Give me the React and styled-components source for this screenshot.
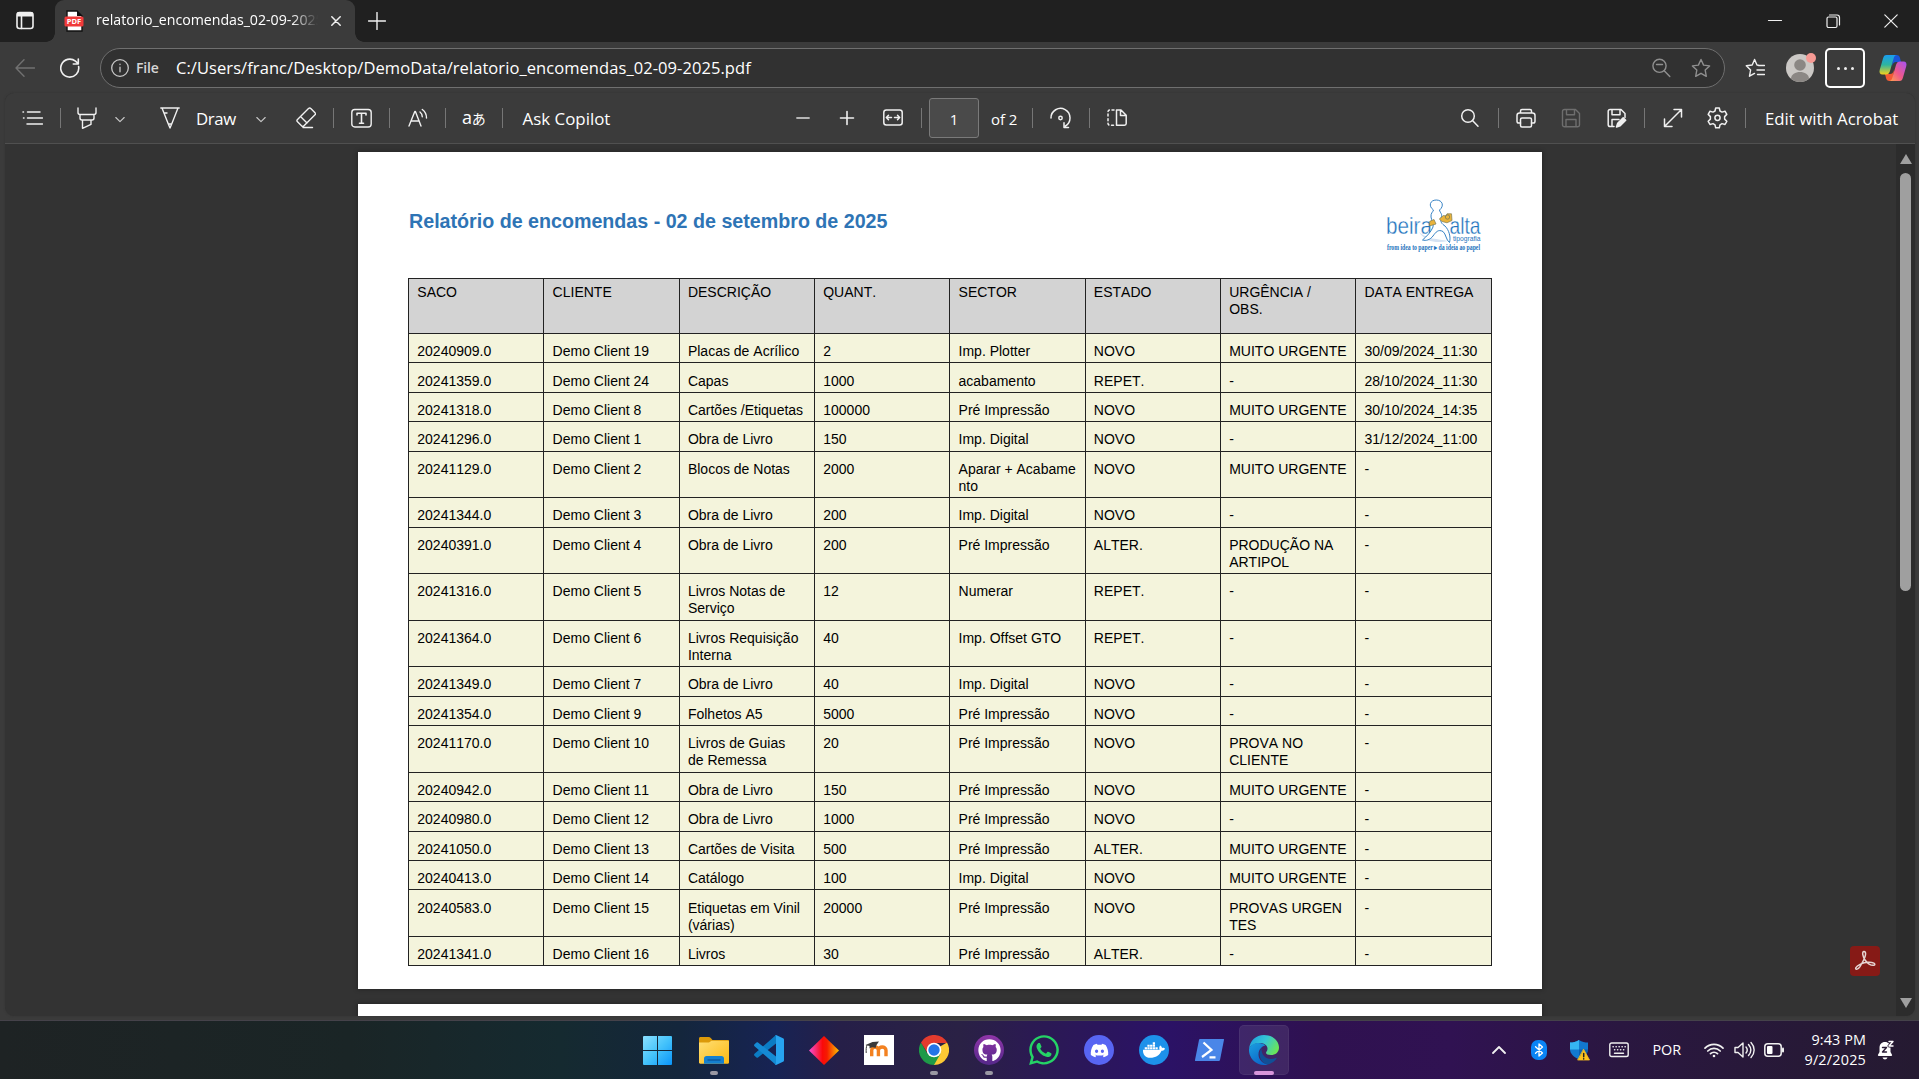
import React from "react";
import styled, { createGlobalStyle, css } from "styled-components";
import { FaGithub, FaWhatsapp, FaDiscord, FaDocker } from "react-icons/fa";

const GlobalStyle = createGlobalStyle`
  * { box-sizing: border-box; }
  html, body { margin: 0; padding: 0; background: #3b3b3b; }
  body { overflow: hidden; }
`;

const ui = `"Open Sans", "Noto Sans", sans-serif`;

const Desktop = styled.div`
  width: 1919px;
  height: 1079px;
  display: flex;
  flex-direction: column;
  overflow: hidden;
  background: #3b3b3b;
  font-family: ${ui};
  color: #fff;
`;

const Label = styled.span`
  display: block;
  flex: none;
  white-space: nowrap;
  font-size: ${(p) => p.$size || 16.5}px;
  line-height: 24px;
  letter-spacing: ${(p) => p.$ls || 0}px;
  font-weight: ${(p) => p.$weight || 400};
  width: ${(p) => (p.$w ? `${p.$w}px` : "auto")};
  margin-left: ${(p) => p.$ml || 0}px;
  padding-top: ${(p) => p.$drop || 0}px;
  padding-bottom: ${(p) => p.$lift || 0}px;
  color: ${(p) => p.$color || "#fff"};
`;

const AltScriptLabel = styled(Label)`
  font-family: "Open Sans", "Noto Sans CJK JP", sans-serif;
  small {
    font-size: 14px;
  }
`;

const IconBox = styled.svg`
  display: block;
  flex: none;
  width: ${(p) => p.$w || 20}px;
  height: ${(p) => p.$h || p.$w || 20}px;
  margin-left: ${(p) => p.$ml || 0}px;
  fill: none;
  stroke: ${(p) => p.$color || "#f0f0f0"};
  stroke-width: ${(p) => p.$sw || 1.4};
  stroke-linecap: round;
  stroke-linejoin: round;
`;

const Icon = ({ w = 20, h, children, ...rest }) => (
  <IconBox $w={w} $h={h || w} viewBox={`0 0 ${w} ${h || w}`} {...rest}>
    {children}
  </IconBox>
);

/* ---------- Tab strip ---------- */

const TabStrip = styled.header`
  height: 42px;
  flex: none;
  display: flex;
  align-items: center;
  background: #202020;
  padding-left: 15px;
`;

const Tab = styled.div`
  position: relative;
  width: 300px;
  height: 42px;
  margin-left: 20px;
  padding-left: 9px;
  padding-bottom: 1px;
  display: flex;
  align-items: center;
  background: #3b3b3b;
  border-radius: 9px 9px 0 0;
  &::before,
  &::after {
    content: "";
    position: absolute;
    bottom: 0;
    width: 9px;
    height: 9px;
  }
  &::before {
    left: -9px;
    background: radial-gradient(circle at 0 0, #202020 8.5px, #3b3b3b 9px);
  }
  &::after {
    right: -9px;
    background: radial-gradient(circle at 100% 0, #202020 8.5px, #3b3b3b 9px);
  }
`;

const TabTitle = styled(Label)`
  overflow: hidden;
  mask-image: linear-gradient(90deg, #000 88%, transparent 100%);
`;

const WindowControls = styled.div`
  display: flex;
  align-items: center;
  margin-left: auto;
  margin-right: 20px;
  gap: 42px;
`;

/* ---------- Address row ---------- */

const AddressRow = styled.div`
  height: 51px;
  flex: none;
  display: flex;
  align-items: center;
  padding: 1px 12px 0 15px;
  background: #3b3b3b;
`;

const AddressBar = styled.div`
  width: 1625px;
  height: 40px;
  margin-left: 20px;
  padding: 0 13px 0 10px;
  display: flex;
  align-items: center;
  border: 1px solid #6f6f6f;
  border-radius: 20px;
  background: #313131;
`;

const Spacer = styled.div`
  flex: 1;
`;

const MoreButton = styled.div`
  width: 40px;
  height: 40px;
  margin-left: 11px;
  display: flex;
  align-items: center;
  justify-content: center;
  gap: 4px;
  border: 2px solid #fff;
  border-radius: 5px;
`;

const Dot = styled.i`
  width: 3px;
  height: 3px;
  border-radius: 50%;
  background: #eee;
`;

/* ---------- PDF viewer ---------- */

const Viewer = styled.main`
  height: 923px;
  flex: none;
  margin: 0 4px 0 5px;
  display: flex;
  flex-direction: column;
  overflow: hidden;
  border-radius: 9px;
  background: #333;
  box-shadow: 0 0 2px 0 #333;
`;

const Toolbar = styled.div`
  height: 51px;
  flex: none;
  display: flex;
  align-items: center;
  padding-right: 16px;
  background: #3b3b3b;
  border-bottom: 1px solid #505050;
`;

const Divider = styled.i`
  width: 1px;
  height: 20px;
  flex: none;
  margin-left: ${(p) => p.$ml}px;
  background: #767676;
`;

const PageInput = styled.div`
  width: 50px;
  height: 40px;
  margin-left: 7px;
  display: flex;
  align-items: center;
  justify-content: center;
  background: #4a4a4a;
  border: 1px solid #7a7a7a;
  border-radius: 3px;
`;

const ViewerBody = styled.div`
  flex: 1;
  min-height: 0;
  display: flex;
`;

const Pages = styled.div`
  position: relative;
  flex: 1;
  display: flex;
  flex-direction: column;
  gap: 15px;
  padding: 8px 0 0 353px;
  overflow: hidden;
`;

const Sheet = styled.section`
  width: 1184px;
  height: ${(p) => p.$h}px;
  flex: none;
  background: #fff;
  padding: 47px 50px 0;
  box-shadow: 0 0 4px 1px rgba(0, 0, 0, 0.25);
`;

const SheetHeader = styled.div`
  height: 79.3px;
  display: flex;
  justify-content: space-between;
  padding: 0 9px 0 1px;
`;

const ReportTitle = styled.h1`
  margin: 10px 0 0;
  font: bold 19.66px/24px "Liberation Sans", Arial, sans-serif;
  color: #2e74b5;
  white-space: nowrap;
`;

const Table = styled.div`
  width: 1083.5px;
  display: flex;
  flex-direction: column;
  border-left: 1px solid #222;
  border-top: 1px solid #222;
  color: #000;
  font: 14px/17.1px "Liberation Sans", Arial, sans-serif;
  font-kerning: none;
`;

const Row = styled.div`
  display: grid;
  grid-template-columns: repeat(8, 1fr);
  height: ${(p) => p.$h}px;
  background: ${(p) => (p.$head ? "#d3d3d3" : "#f4f4dc")};
`;

const Cell = styled.div`
  padding: ${(p) => (p.$head ? 4.8 : 9.2)}px 0 0 8.3px;
  border-right: 1px solid #222;
  border-bottom: 1px solid #222;
  white-space: pre;
`;

const AcrobatBadge = styled.div`
  position: absolute;
  right: 16px;
  bottom: 40px;
  width: 30px;
  height: 30px;
  display: flex;
  align-items: center;
  justify-content: center;
  border-radius: 4px;
  background: #861a16;
`;

const ScrollTrack = styled.div`
  width: 19px;
  flex: none;
  display: flex;
  flex-direction: column;
  align-items: center;
  padding: 10px 0 8px;
  background: #2c2c2c;
`;

const Arrow = styled.i`
  width: 0;
  height: 0;
  border: 6.5px solid transparent;
  ${(p) =>
    p.$up
      ? css`
          border-top: 0;
          border-bottom: 10px solid #9f9f9f;
        `
      : css`
          border-bottom: 0;
          border-top: 10px solid #9f9f9f;
          margin-top: auto;
        `}
`;

const Thumb = styled.div`
  width: 11px;
  height: 418px;
  margin-top: 9px;
  border-radius: 6px;
  background: #9f9f9f;
`;

/* ---------- Taskbar ---------- */

const Taskbar = styled.footer`
  height: 59px;
  flex: none;
  margin-top: 4px;
  display: flex;
  align-items: center;
  padding: 0 25px 0 628px;
  border-top: 1px solid #45424a;
  background: linear-gradient(
    90deg,
    #1e2324 0,
    #1a2526 350px,
    #152a30 560px,
    #14263c 680px,
    #172354 775px,
    #261f48 840px,
    #2a2145 960px,
    #2b1a52 1030px,
    #2b1266 1165px,
    #2f1150 1320px,
    #301252 1450px,
    #2a1740 1620px,
    #251a31 1919px
  );
`;

const App = styled.div`
  width: ${(p) => p.$w || 55}px;
  height: 58px;
  flex: none;
  position: relative;
  display: flex;
  align-items: center;
  justify-content: center;
`;

const ActiveTile = styled.div`
  width: 50px;
  height: 50px;
  display: flex;
  align-items: center;
  justify-content: center;
  border-radius: 5px;
  background: rgba(255, 255, 255, 0.09);
  box-shadow: inset 0 0 0 1px rgba(255, 255, 255, 0.05);
`;

const Running = styled.i`
  position: absolute;
  left: 50%;
  bottom: 4px;
  width: ${(p) => p.$w || 8}px;
  height: 4px;
  transform: translateX(-50%);
  border-radius: 2px;
  background: ${(p) => p.$color || "#9a98a3"};
`;

const Disc = styled.div`
  width: 30px;
  height: 30px;
  display: flex;
  align-items: center;
  justify-content: center;
  border-radius: 50%;
  color: #fff;
  background: ${(p) => p.$bg};
`;

const Clock = styled.div`
  width: 82px;
  display: flex;
  flex-direction: column;
  align-items: flex-end;
`;

const ClockLine = styled.span`
  font: 14.4px/20px ${ui};
  letter-spacing: ${(p) => p.$ls}px;
  white-space: nowrap;
`;

const headers = ["SACO", "CLIENTE", "DESCRIÇÃO", "QUANT.", "SECTOR", "ESTADO", "URGÊNCIA /\nOBS.", "DATA ENTREGA"];

const rows = [
  ["20240909.0", "Demo Client 19", "Placas de Acrílico", "2", "Imp. Plotter", "NOVO", "MUITO URGENTE", "30/09/2024_11:30"],
  ["20241359.0", "Demo Client 24", "Capas", "1000", "acabamento", "REPET.", "-", "28/10/2024_11:30"],
  ["20241318.0", "Demo Client 8", "Cartões /Etiquetas", "100000", "Pré Impressão", "NOVO", "MUITO URGENTE", "30/10/2024_14:35"],
  ["20241296.0", "Demo Client 1", "Obra de Livro", "150", "Imp. Digital", "NOVO", "-", "31/12/2024_11:00"],
  ["20241129.0", "Demo Client 2", "Blocos de Notas", "2000", "Aparar + Acabame\nnto", "NOVO", "MUITO URGENTE", "-"],
  ["20241344.0", "Demo Client 3", "Obra de Livro", "200", "Imp. Digital", "NOVO", "-", "-"],
  ["20240391.0", "Demo Client 4", "Obra de Livro", "200", "Pré Impressão", "ALTER.", "PRODUÇÃO NA\nARTIPOL", "-"],
  ["20241316.0", "Demo Client 5", "Livros Notas de\nServiço", "12", "Numerar", "REPET.", "-", "-"],
  ["20241364.0", "Demo Client 6", "Livros Requisição\nInterna", "40", "Imp. Offset GTO", "REPET.", "-", "-"],
  ["20241349.0", "Demo Client 7", "Obra de Livro", "40", "Imp. Digital", "NOVO", "-", "-"],
  ["20241354.0", "Demo Client 9", "Folhetos A5", "5000", "Pré Impressão", "NOVO", "-", "-"],
  ["20241170.0", "Demo Client 10", "Livros de Guias\nde Remessa", "20", "Pré Impressão", "NOVO", "PROVA NO\nCLIENTE", "-"],
  ["20240942.0", "Demo Client 11", "Obra de Livro", "150", "Pré Impressão", "NOVO", "MUITO URGENTE", "-"],
  ["20240980.0", "Demo Client 12", "Obra de Livro", "1000", "Pré Impressão", "NOVO", "-", "-"],
  ["20241050.0", "Demo Client 13", "Cartões de Visita", "500", "Pré Impressão", "ALTER.", "MUITO URGENTE", "-"],
  ["20240413.0", "Demo Client 14", "Catálogo", "100", "Imp. Digital", "NOVO", "MUITO URGENTE", "-"],
  ["20240583.0", "Demo Client 15", "Etiquetas em Vinil\n(várias)", "20000", "Pré Impressão", "NOVO", "PROVAS URGEN\nTES", "-"],
  ["20241341.0", "Demo Client 16", "Livros", "30", "Pré Impressão", "ALTER.", "-", "-"],
];

const LogoSvg = styled.svg`
  display: block;
  flex: none;
  overflow: visible;
  font-family: "Liberation Sans", Arial, sans-serif;
`;

const CompanyLogo = () => (
  <LogoSvg width="97" height="55" viewBox="0 0 97 55">
    <path d="M33 33 C40 40 52 40 62 42 C52 44 40 44 33 33Z" fill="#d5e2f2" />
    <g fill="#1f74bd">
      <text x="0" y="34.500" fontSize="24" textLength="46" lengthAdjust="spacingAndGlyphs" stroke="#fff" strokeWidth="0.35">beira</text>
      <text x="63.500" y="34.500" fontSize="24" textLength="31" lengthAdjust="spacingAndGlyphs" stroke="#fff" strokeWidth="0.35">alta</text>
      <text x="67" y="42.300" fontSize="7.500" textLength="27.500" lengthAdjust="spacingAndGlyphs">tipografia</text>
      <text x="1" y="51" fontSize="7.500" fontWeight="bold" textLength="93" lengthAdjust="spacingAndGlyphs" fontFamily="Liberation Serif, serif">from idea to paper ▸ da ideia ao papel</text>
    </g>
    <path d="M47.500 11 C42 7 44 1 50.300 1 C56.500 1 58.500 7 53.500 11 C54 14 57 15 55 19 C54 23 56 25 59 27 C63 31 65 38 63.500 43.500 C60 41 60 35 57 32.500 C52 30 50 33 47 37 C44 41 40 42 36.500 41 C41 37 45 33 47 28 C48 24 45.500 22 45 18 C44.500 14 47 13 47.500 11Z" fill="#fff" stroke="#1f74bd" strokeWidth="0.9" />
    <path d="M53.300 20 L57.500 16.500 L60 17 L61 14.800 L65.500 14.800 L66 21.500 L61 23.800 L56 22.500Z M43.800 22.300 L48 20.500 L50 25 L43.300 27Z" fill="#eab33a" stroke="#7d7b52" strokeWidth="0.7" />
    <circle cx="61.500" cy="18" r="2.200" fill="none" stroke="#7d7b52" strokeWidth="0.8" />
  </LogoSvg>
);

const CopilotLogo = () => (
  <svg width="28" height="28" viewBox="0 0 28 28">
    <defs>
      <linearGradient id="cpA" x1="0" y1="0" x2="0" y2="1">
        <stop offset="0" stopColor="#1a9df0" />
        <stop offset="0.5" stopColor="#2db5a0" />
        <stop offset="1" stopColor="#f2d21c" />
      </linearGradient>
      <linearGradient id="cpB" x1="1" y1="0" x2="0" y2="1">
        <stop offset="0" stopColor="#a552f5" />
        <stop offset="0.55" stopColor="#f0588a" />
        <stop offset="1" stopColor="#ffa64a" />
      </linearGradient>
    </defs>
    <path d="M14 1h3.500c2 0 3 1 3.500 3l1 4h-5c-2 0-3 1-4 4z" fill="#1a55d8" />
    <path d="M14 27h-3.500c-2 0-3-1-3.500-3l-1-4h5c2 0 3-1 4-4z" fill="#f25a34" />
    <path d="M7.500 1H18c-2 0-2.800 1.500-3.400 3.500L11 17c-.8 2.500-2 3.500-4 3.500H3.500c-2.500 0-3.500-1.800-2.800-4.500L4 4.500C4.700 2 5.500 1 7.500 1z" fill="url(#cpA)" />
    <path d="M20.500 27H10c2 0 2.800-1.500 3.400-3.500L17 11c.8-2.500 2-3.500 4-3.500h3.500c2.500 0 3.500 1.800 2.800 4.500L24 23.500c-.7 2.500-1.500 3.500-3.500 3.500z" fill="url(#cpB)" />
  </svg>
);

const Avatar = styled.div`
  position: relative;
  width: 28px;
  height: 28px;
  margin-left: 21px;
`;

const AvatarDot = styled.i`
  position: absolute;
  top: -1px;
  right: -2px;
  width: 10px;
  height: 10px;
  border-radius: 50%;
  background: #f79a94;
`;

const PdfFileIcon = () => (
  <svg width="20" height="22" viewBox="0 0 20 22">
    <path d="M3 1h10l5 5v15H3z" fill="#fff" stroke="#111" strokeWidth="1.4" />
    <path d="M13 1l5 5h-5z" fill="#111" />
    <rect x="0.500" y="6.500" width="19" height="10" rx="1.500" fill="#f03a3a" />
    <text x="10" y="14.300" textAnchor="middle" fontSize="7.500" fontWeight="bold" fontFamily="Open Sans, sans-serif" fill="#fff">PDF</text>
  </svg>
);

const TitleBar = () => (
  <TabStrip>
    <Icon $sw={1.6}>
      <rect x="2" y="1.500" width="16" height="16" rx="2.500" />
      <path d="M2 4h16M2.500 2.500h15" strokeWidth="3" strokeLinecap="butt" />
      <path d="M6.500 5v12.500" />
    </Icon>
    <Tab>
      <PdfFileIcon />
      <TabTitle $ml={12} $w={222} $size={14.2} $ls={-0.02} $lift={1}>relatorio_encomendas_02-09-2025.pdf</TabTitle>
      <Icon w={10} $ml={13} $sw={1.5}><path d="M.8.8l8.400 8.400M9.200.8L.8 9.200" /></Icon>
    </Tab>
    <Icon w={18} $ml={13} $sw={1.4}><path d="M9 .5v17M.5 9h17" /></Icon>
    <WindowControls>
      <Icon w={16} $sw={1.2}><path d="M1.500 7.500h13" /></Icon>
      <Icon w={16} $sw={1.2}>
        <rect x="2" y="4" width="10" height="10.500" rx="1.500" />
        <path d="M4.500 2h7.500a2.500 2.500 0 0 1 2.500 2.500v7.500" />
      </Icon>
      <Icon w={16} $sw={1.2}><path d="M1.800 1.800l12.400 12.400M14.200 1.800L1.800 14.200" /></Icon>
    </WindowControls>
  </TabStrip>
);

const star = "M10 1.500l2.600 5.600 6 .8-4.400 4.200 1.100 6.200L10 15.300l-5.300 3 1.100-6.200L1.400 7.900l6-.8z";

const Navigation = () => (
  <AddressRow>
    <Icon $color="#717171"><path d="M19.500 10H1M9 1.800L1 10l8 8.200" /></Icon>
    <Icon $ml={25} $sw={1.6}>
      <path d="M18.600 8.500A9 9 0 1 1 15.500 3.200L18 5.500M18.300 1v5h-5" />
    </Icon>
    <AddressBar>
      <Icon w={18} $color="#c8c8c8" $sw={1.3}>
        <circle cx="9" cy="9" r="8.300" />
        <path d="M9 8.200v4.600M9 5.200v.3" />
      </Icon>
      <Label $ml={7} $w={40} $size={14} $weight={600} $color="#d6d6d6" $ls={-0.2}>File</Label>
      <Label $size={16.5} $ls={0.07} $lift={1}>C:/Users/franc/Desktop/DemoData/relatorio_encomendas_02-09-2025.pdf</Label>
      <Spacer />
      <Icon $color="#8f8f8f">
        <circle cx="8.500" cy="7.800" r="6.600" />
        <path d="M5.500 6.500h6M13.200 12.700l5.600 5.800" />
      </Icon>
      <Icon $ml={20} $color="#8f8f8f"><path d={star} /></Icon>
    </AddressBar>
    <Icon $ml={20}>
      <path d="M13.500 7.200L12 7l-2.400-5.500L7.200 7l-5.900.8 4.300 4.200-1.100 6.200 5-2.800M13.500 7.500h6M12 12h7.500M12.500 16.500h7" />
    </Icon>
    <Avatar>
      <svg width="28" height="28" viewBox="0 0 28 28">
        <circle cx="14" cy="14" r="14" fill="#cbc8c5" />
        <circle cx="14" cy="11" r="5.800" fill="#8b8784" />
        <path d="M5 24.700c0-9 18-9 18 0A14 14 0 0 1 5 24.700z" fill="#8b8784" />
      </svg>
      <AvatarDot />
    </Avatar>
    <MoreButton><Dot /><Dot /><Dot /></MoreButton>
    <Spacer />
    <CopilotLogo />
  </AddressRow>
);

const Chevron = ({ ml }) => (
  <Icon w={10} $ml={ml} $sw={1.1} $color="#c8c8c8"><path d="M.8 4.500l4.200 4.200L9.200 4.500" /></Icon>
);

const PdfToolbar = () => (
  <Toolbar>
    <Icon w={21} $ml={17} $sw={1.5}>
      <path d="M5.500 4h12.500M5.500 10h15M5.500 16h15M1 4h.5M1.500 10h.5M5.500 10M5 16h.5" />
    </Icon>
    <Divider $ml={17} />
    <Icon h={22} $ml={16}>
      <path d="M1 1v4.500C1 7 2 7.500 3 7.500h14c1 0 2-.5 2-2V1M3 7.500v3.500c0 1.500 1 2 2 2h10c1 0 2-.5 2-2V7.500M5.500 13v8.300l8.500-4V13" />
    </Icon>
    <Chevron ml={17.500} />
    <Icon h={22} $ml={35.500}>
      <path d="M.8 1h18.400M2 1l6.300 16h3.400L18 1M8.300 17l1.700 4 1.700-4M4 6h3" />
    </Icon>
    <Label $ml={16} $w={40} $size={16.8} $ls={-0.4} $drop={1}>Draw</Label>
    <Chevron ml={19.500} />
    <Icon h={22} $ml={30.500}>
      <path d="M12.500 1.500L1.500 12.500c-.8.8-.8 1.500 0 2.300l4 4c.8.8 1.700.8 2.500 0L19 7.800c.7-.7.7-1.400 0-2l-4.200-4.300c-.7-.7-1.500-.7-2.300 0zM4.500 9.500l6.500 6.500M7 20.500h9.500" />
    </Icon>
    <Divider $ml={17} />
    <Icon w={21} $ml={17}>
      <rect x=".8" y="1.500" width="19.400" height="17.500" rx="3" />
      <path d="M6 7V5.300h9V7M10.500 5.300v10M8.500 15.300h4" strokeWidth="1.6" />
    </Icon>
    <Divider $ml={17} />
    <Icon $ml={18}>
      <path d="M1 18L6.800 3.500h.6L13 18M3 13h8.200M12 4c1.500 1.200 2.200 2.800 2.300 4.800M14.300 1.500c2.800 2 4.200 5 4.200 8.500" />
    </Icon>
    <Divider $ml={17} />
    <AltScriptLabel $ml={16} $w={23} $size={18} $ls={-0.3} $lift={1}>a<small>あ</small></AltScriptLabel>
    <Divider $ml={17} />
    <Label $ml={19.500} $w={88.500} $size={16.9} $drop={1}>Ask Copilot</Label>

    <Icon $ml={182} $color="#b5b5b5" $sw={1.8}><path d="M4 10h12" /></Icon>
    <Icon $ml={24} $sw={1.6}><path d="M3.500 10h13M10 3.500v13" /></Icon>
    <Icon $ml={26} $sw={1.5}>
      <rect x=".8" y="2" width="18.400" height="15" rx="2.500" />
      <path d="M3.500 9.500h5M5.500 7.300l-2.200 2.200 2.200 2.200M16.500 9.500h-5M14.500 7.300l2.200 2.200-2.200 2.200" />
    </Icon>
    <Divider $ml={18} />
    <PageInput><Label $size={15} $drop={1}>1</Label></PageInput>
    <Label $ml={12} $w={26} $size={15} $ls={-0.05} $drop={1}>of 2</Label>
    <Divider $ml={15} />
    <Icon w={21} h={22} $ml={17} $sw={1.5}>
      <path d="M1 11a9.500 9.500 0 1 1 14.500 8M14 15.800v4.700h4.500" />
      <circle cx="10.500" cy="11" r="1.700" />
    </Icon>
    <Divider $ml={18} />
    <Icon $ml={17} $sw={1.5}>
      <path d="M9.500 2h4.500l5.200 5.200V15.500c0 1-.7 1.700-1.700 1.700h-8zM13.500 2.500v5h5" />
      <path d="M7 2H3C1.800 2 1 2.800 1 4v11.500c0 1 .8 1.700 2 1.700h4" strokeDasharray="2 2.600" />
    </Icon>

    <Spacer />
    <Icon $sw={1.5}><circle cx="8" cy="8" r="6.300" /><path d="M12.500 12.500l5.500 5.800" /></Icon>
    <Divider $ml={18} />
    <Icon $ml={17.500} $sw={1.5}>
      <path d="M4.500 5V3c0-1 .6-1.500 1.500-1.500h8c1 0 1.500.5 1.500 1.500v2M4.500 15H2.800C1.500 15 1 14.300 1 13.200V7.500C1 6 2 5 3.500 5h13C18 5 19 6 19 7.500v5.700c0 1.100-.6 1.800-1.800 1.800h-1.700" />
      <rect x="4.500" y="10" width="11" height="9" rx="1.500" />
    </Icon>
    <Icon $ml={24.500} $color="#6e6e6e">
      <path d="M3.500 1.500h11l4 4V17c0 1-.7 1.700-1.700 1.700H3.500c-1.200 0-2-.8-2-1.900V3.500c0-1.200.8-2 2-2zM5.500 1.500v5.300h8V1.500M5 18.500v-7h10v7" />
    </Icon>
    <Icon $ml={26} $sw={1.5}>
      <path d="M7 18.500H3.200c-1.200 0-2-.7-2-1.800V3.300c0-1.100.8-1.800 2-1.800H14l4 4v4M5 1.500v5.300h8V1.500M5 18.500v-7h7" />
      <path d="M9.500 19l1.200-3.800 5.500-5.500 2.500 2.500-5.500 5.500z" fill="#f0f0f0" />
    </Icon>
    <Divider $ml={17} />
    <Icon $ml={18} $sw={1.5}><path d="M1.500 18.500l17-17M11 1.500h7.500V9M1.500 11v7.500H9" /></Icon>
    <Icon w={21} h={22} $ml={24} $sw={1.5}>
      <path d="M8.700 1h3.600l.7 3 2 1.100 3-.9 1.800 3.200-2.200 2.200v2.500l2.200 2.200-1.800 3.200-3-.9-2 1.200-.7 3H8.700l-.7-3-2-1.200-3 .9-1.800-3.200 2.200-2.200V9.600L1.200 7.400 3 4.200l3 .9L8 4z" />
      <circle cx="10.500" cy="10.800" r="2.600" />
    </Icon>
    <Divider $ml={17} />
    <Label $ml={19.500} $w={134} $size={16.8} $ls={0} $drop={1}>Edit with Acrobat</Label>
  </Toolbar>
);

const Document = () => (
  <ViewerBody>
    <Pages>
      <Sheet $h={837}>
        <SheetHeader>
          <ReportTitle>Relatório de encomendas - 02 de setembro de 2025</ReportTitle>
          <CompanyLogo />
        </SheetHeader>
        <Table>
          <Row $h={54.6} $head>
            {headers.map((h) => <Cell key={h} $head>{h}</Cell>)}
          </Row>
          {rows.map((r) => (
            <Row key={r[0]} $h={r.some((c) => c.includes("\n")) ? 46.55 : 29.45}>
              {r.map((c, i) => <Cell key={i}>{c}</Cell>)}
            </Row>
          ))}
        </Table>
      </Sheet>
      <Sheet $h={837} />
      <AcrobatBadge>
        <Icon w={24} $color="#e6d5d3" $sw={1.5}>
          <path d="M11 2.500c-2.500 0-1 5.500 1 8.500s6 6 9 5.200c2.500-1-1-3.400-6-3-5 .3-11 3-12.200 5.600-.8 2 1.800 2.300 4-1 2.500-4 5.200-9 5.700-12 .3-2-.2-3.300-1.500-3.300z" />
        </Icon>
      </AcrobatBadge>
    </Pages>
    <ScrollTrack>
      <Arrow $up />
      <Thumb />
      <Arrow />
    </ScrollTrack>
  </ViewerBody>
);

const WindowsLogo = () => (
  <svg width="29" height="29" viewBox="0 0 29 29">
    <defs>
      <linearGradient id="win" x1="0" y1="0" x2="1" y2="1">
        <stop offset="0" stopColor="#8be0ff" />
        <stop offset="0.5" stopColor="#45c3fb" />
        <stop offset="1" stopColor="#0a95fa" />
      </linearGradient>
    </defs>
    <path d="M0 1a1 1 0 0 1 1-1h13v14H0zM15 0h13a1 1 0 0 1 1 1v13H15zM0 15h14v14H1a1 1 0 0 1-1-1zM15 15h14v13a1 1 0 0 1-1 1H15z" fill="url(#win)" />
  </svg>
);

const ExplorerIcon = () => (
  <svg width="30" height="27" viewBox="0 0 30 27">
    <defs>
      <linearGradient id="fold" x1="0" y1="0" x2="1" y2="1">
        <stop offset="0" stopColor="#ffdf75" />
        <stop offset="1" stopColor="#fcb912" />
      </linearGradient>
    </defs>
    <path d="M0 1.500C0 .6.600 0 1.500 0h8c1 0 1.800.4 2.500 1.200L13.500 3H29c.6 0 1 .4 1 1v5H0z" fill="#dc9a0a" />
    <path d="M0 5.500h10l2.500-1.800H29c.6 0 1 .4 1 1V25.500c0 .8-.6 1.200-1.200 1.200H1.200C.500 26.700 0 26.300 0 25.500z" fill="url(#fold)" />
    <path d="M5 26.700v-5.200c0-1.500 1-2.500 2.500-2.500h15c1.500 0 2.500 1 2.500 2.500v5.200z" fill="#1580cf" />
    <path d="M8.500 23h13" stroke="#0b4f94" strokeWidth="1.200" />
  </svg>
);

const CodeIcon = () => (
  <svg width="30" height="30" viewBox="0 0 30 30">
    <path d="M22 0v8.500L4 22.500c-.5.400-1 .4-1.500 0L.500 20.700c-.6-.6-.6-1.300 0-1.900z" fill="#0b7cc4" />
    <path d="M4 7.500L22 21.500V30L.500 11.200c-.6-.6-.6-1.300 0-1.900l2-1.800c.5-.4 1-.4 1.500 0z" fill="#158ad4" />
    <path d="M22 0l7 3.300c.7.300 1 .8 1 1.500v20.400c0 .7-.3 1.200-1 1.500L22 30c-.6.200-1 0-1.500-.5.800.5 1.500 0 1.500-1V1.500c0-1-.7-1.500-1.500-1C21 0 21.400-.2 22 0z" fill="#27a4f0" />
  </svg>
);

const DiamondIcon = () => (
  <svg width="30" height="29" viewBox="0 0 30 29">
    <defs>
      <linearGradient id="dia">
        <stop offset="0.050" stopColor="#f548c0" />
        <stop offset="0.450" stopColor="#fa0a0a" />
        <stop offset="0.600" stopColor="#f51c00" />
        <stop offset="1" stopColor="#fcc200" />
      </linearGradient>
    </defs>
    <path d="M15 0l15 14.500L15 29 0 14.500z" fill="url(#dia)" />
  </svg>
);

const MoodleIcon = () => (
  <svg width="30" height="30" viewBox="0 0 30 30">
    <rect width="30" height="30" fill="#fff" />
    <path d="M7.700 21.300v-6c0-4.500 6.700-4.500 6.700 0v6M14.400 15.300c0-4.500 7.600-4.500 7.600 0v6" fill="none" stroke="#f38120" strokeWidth="3.400" />
    <path d="M1.500 10l7-3 6.500-.5-2.500 3.500-1 3c-2-1-4-1-6 .5v-2.500z" fill="#3a3a3a" />
    <path d="M3 10c-.8 2-1 4.500-.8 8" stroke="#3a3a3a" fill="none" />
  </svg>
);

const ChromeIcon = () => (
  <svg width="30" height="30" viewBox="0 0 30 30">
    <path d="M15 15L28 7.500A15 15 0 0 1 15 30z" fill="#fcc934" />
    <path d="M15 15l6.500 3.750L15 30A15 15 0 0 1 2 7.500l6.500 11.250z" fill="#1e9a48" />
    <path d="M15 8H28.300A15 15 0 0 0 2 7.500L8.500 18z" fill="#e33b2e" />
    <circle cx="15" cy="15" r="7.300" fill="#fff" />
    <circle cx="15" cy="15" r="5.700" fill="#2374e8" />
  </svg>
);

const PowerShellIcon = () => (
  <svg width="29" height="22" viewBox="0 0 29 22">
    <path d="M5 0h23.300c.6 0 .8.300.7.800L25 21c-.1.600-.5 1-1.200 1H.800c-.6 0-.9-.4-.8-1L4 1c.1-.6.500-1 1-1z" fill="#4a86e8" />
    <path d="M8.500 3.500l8 7.500-9.500 7M14.500 18.300h6" fill="none" stroke="#fff" strokeWidth="2.200" />
  </svg>
);

const EdgeIcon = () => (
  <svg width="30" height="30" viewBox="0 0 30 30">
    <defs>
      <linearGradient id="edgeTop" x1="0" y1="0.200" x2="1" y2="0.600">
        <stop offset="0" stopColor="#1f9fe0" />
        <stop offset="0.500" stopColor="#35c6d4" />
        <stop offset="1" stopColor="#6be556" />
      </linearGradient>
      <linearGradient id="edgeSide" x1="0" y1="0" x2="0.600" y2="1">
        <stop offset="0" stopColor="#1ba0e0" />
        <stop offset="1" stopColor="#0c66c8" />
      </linearGradient>
    </defs>
    <path d="M0 14C1 5.500 7 0 15 0c9 0 15 6 15 12.500 0 5-3.800 7.500-8 7.500-3 0-5-1-5-2.300 0-1 1.500-1.500 1.500-4 0-3-3-5.700-7.500-5.700C5.500 8 1.500 10.500 0 14z" fill="url(#edgeTop)" />
    <path d="M0 14c1.500-4 5-6 9.500-6 3 0 5.500 1 7 2.500-3 .5-7 3.500-7 9 0 5 4 9 9.500 10-1.300.400-2.600.5-4 .5A15 15 0 0 1 0 14z" fill="url(#edgeSide)" />
    <path d="M12.500 13c-5 8 1 16 6.500 16.500 3.500-1 6.500-3 8.500-6 .3-.6-.2-1-.8-.6C20 26 12 22.500 12.500 13z" fill="#114f96" />
  </svg>
);

const Start = () => (
  <Taskbar>
    <App $w={58.5}><WindowsLogo /></App>
    <App><ExplorerIcon /><Running /></App>
    <App><CodeIcon /></App>
    <App><DiamondIcon /></App>
    <App><MoodleIcon /></App>
    <App><ChromeIcon /><Running /></App>
    <App><Disc $bg="linear-gradient(#8f35a8, #55288a)"><FaGithub size={23} /></Disc><Running /></App>
    <App><FaWhatsapp size={34} color="#25d366" /></App>
    <App><Disc $bg="#5865f2"><FaDiscord size={19} /></Disc></App>
    <App><Disc $bg="#1d91ea"><FaDocker size={22} /></Disc></App>
    <App><PowerShellIcon /></App>
    <App>
      <ActiveTile><EdgeIcon /></ActiveTile>
      <Running $w={20} $color="#d896dc" />
    </App>
    <Spacer />
    <Icon w={14} $sw={1.8}><path d="M1 10l6-6 6 6" /></Icon>
    <Icon w={16} h={20} $ml={25} $color="#fff" $sw={1.3}>
      <rect width="16" height="20" rx="7" fill="#0a84f5" stroke="none" />
      <path d="M4.500 6.800l7 6.200L8 16V4l3.500 3-7 6.200" />
    </Icon>
    <Icon w={20} h={21} $ml={23}>
      <path d="M9 0c3 2 6 2.500 9 2.500V9c0 5-4 8-9 10.500C4 17 0 14 0 9V2.500C3 2.500 6 2 9 0z" fill="#1279cf" stroke="none" />
      <path d="M9 0v9.500H0v-7C3 2.500 6 2 9 0z" fill="#35b4f2" stroke="none" />
      <path d="M9 9.500h9C17.500 14 14 17 9 19.500z" fill="#0d5fae" stroke="none" />
      <path d="M13.700 9.500L19.500 20H8z" fill="#fdc21c" stroke="#fdc21c" strokeWidth=".8" />
      <path d="M13.700 13.500v3.200M13.700 18.800v.1" stroke="#222" strokeWidth="1.500" />
    </Icon>
    <Icon w={20} h={16} $ml={19} $sw={1.4}>
      <rect x=".8" y="1" width="18.400" height="13.500" rx="1.800" />
      <path d="M4 4.800h.3M7 4.800h.3M10 4.800h.3M13 4.800h.3M16 4.800h.3M5.500 7.800h.3M8.500 7.800h.3M11.500 7.800h.3M14.500 7.800h.3M5.500 11.300h9" />
    </Icon>
    <Label $ml={23.500} $w={28.500} $size={14.4} $ls={-0.1}>POR</Label>
    <Icon w={20} h={16} $ml={23} $sw={1.7}>
      <path d="M1 6.200a12.500 12.500 0 0 1 18 0M3.800 9a8.700 8.700 0 0 1 12.400 0M6.500 11.700a5 5 0 0 1 7 0" />
      <circle cx="10" cy="14" r="1.300" fill="#f0f0f0" stroke="none" />
    </Icon>
    <Icon w={21} h={18} $ml={10} $sw={1.4}>
      <path d="M1 6.500h3L9 2v14l-5-4.500H1zM12 6c1.500 1.800 1.500 4.200 0 6M14.500 3.500c3 3.500 3 7.500 0 11M17 1.500c4.200 4.500 4.200 10.500 0 15" />
    </Icon>
    <Icon w={20} h={14} $ml={9} $sw={1.5}>
      <rect x=".8" y=".8" width="16.400" height="12.400" rx="3" />
      <rect x="3" y="3" width="5.500" height="8" rx="1" fill="#fff" stroke="none" />
      <path d="M19 5.500v3" strokeWidth="2" />
    </Icon>
    <Clock>
      <ClockLine $ls={0.1}>9:43 PM</ClockLine>
      <ClockLine $ls={0.2}>9/2/2025</ClockLine>
    </Clock>
    <Icon w={17} h={20} $ml={11}>
      <path d="M8 2C4.500 2 2.500 4.500 2.500 8v4L1 14.800c-.3.700 0 1.200.7 1.200h12.600c.7 0 1-.5.700-1.200L13.500 12V8C13.500 4.500 11.500 2 8 2zM5.500 17.500c.8 2.500 4.200 2.500 5 0z" fill="#fff" stroke="none" />
      <path d="M5.500 7.500h4l-4 4.500h4" stroke="#291a35" strokeWidth="1.400" />
      <path d="M12 1.500h4l-4 4.500h4" stroke="#291a35" strokeWidth="3" />
      <path d="M12 1.500h4l-4 4.500h4" stroke="#fff" strokeWidth="1.400" />
    </Icon>
  </Taskbar>
);

export default function Screen() {
  return (
    <>
      <GlobalStyle />
      <Desktop>
        <TitleBar />
        <Navigation />
        <Viewer>
          <PdfToolbar />
          <Document />
        </Viewer>
        <Start />
      </Desktop>
    </>
  );
}
